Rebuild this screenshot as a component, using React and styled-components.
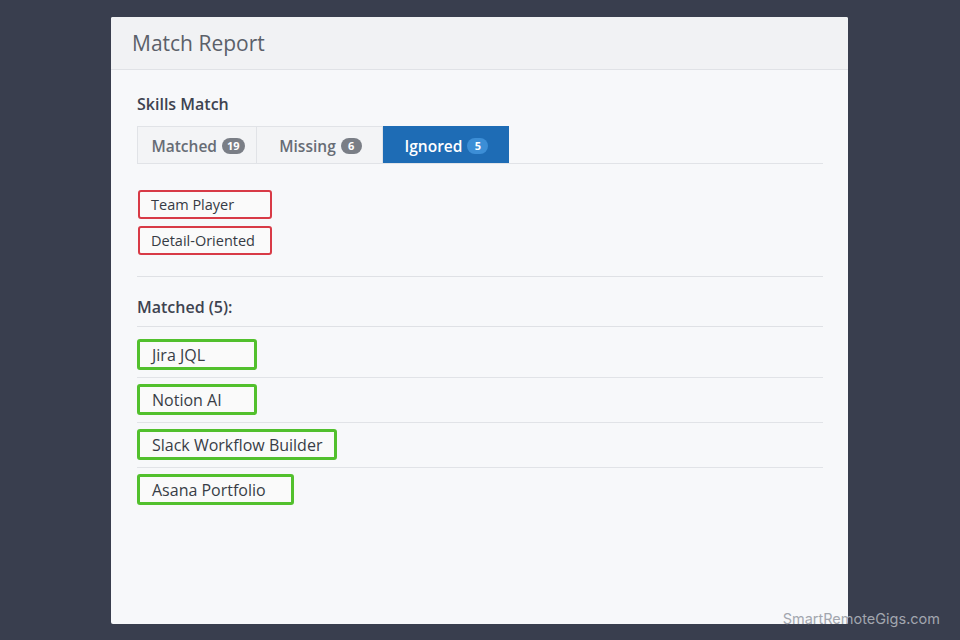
import React, { useState } from 'react';
import styled, { createGlobalStyle } from 'styled-components';

const GlobalStyle = createGlobalStyle`
  html, body {
    margin: 0;
    padding: 0;
    background: #393e4e;
    font-family: "Open Sans", "Noto Sans", sans-serif;
  }
  * { box-sizing: border-box; }
`;

const Page = styled.div`
  width: 960px;
  height: 640px;
  padding: 17px 0 0 111px;
  position: relative;
  overflow: hidden;
`;

const Card = styled.div`
  width: 737px;
  height: 607px;
  background: #f7f8fa;
  border-radius: 2px;
  display: flex;
  flex-direction: column;
`;

const CardHeader = styled.div`
  height: 53px;
  padding: 0 21px;
  display: flex;
  align-items: center;
  background: #f1f2f4;
  border-bottom: 1px solid #e0e2e6;
  border-radius: 2px 2px 0 0;
`;

const CardTitle = styled.h2`
  margin: 0;
  font-size: 21px;
  font-weight: 400;
  color: #5b6069;
`;

const CardBody = styled.div`
  padding: 23px 25px 0 26px;
`;

const SectionTitle = styled.h3`
  margin: 0 0 11px;
  font-size: 16px;
  line-height: 22px;
  font-weight: 600;
  color: #3e4350;
`;

const Tabs = styled.div`
  display: flex;
  border-bottom: 1px solid #e1e3e7;
`;

const Tab = styled.button`
  width: ${({ $w }) => $w}px;
  height: 37px;
  display: flex;
  align-items: center;
  justify-content: center;
  gap: 5px;
  padding: 1px 0 0 2px;
  font-family: inherit;
  font-size: 15.5px;
  font-weight: 600;
  color: ${({ $active }) => ($active ? '#ffffff' : '#676c75')};
  background: ${({ $active }) => ($active ? '#1e6cb5' : '#f3f4f6')};
  border: 1px solid ${({ $active }) => ($active ? '#1e6cb5' : '#e1e3e7')};
  border-left-width: ${({ $first }) => ($first ? '1px' : '0')};
  border-bottom: none;
  cursor: pointer;
`;

const Badge = styled.span`
  min-width: 21px;
  height: 16px;
  padding: 0 5px;
  border-radius: 8px;
  display: inline-flex;
  align-items: center;
  justify-content: center;
  font-size: 11px;
  font-weight: 700;
  color: #ffffff;
  background: ${({ $active }) => ($active ? '#3c8ed6' : '#7a7e86')};
`;

const IgnoredList = styled.div`
  display: flex;
  flex-direction: column;
  align-items: flex-start;
  gap: 7px;
  padding: 26px 0 21px 1px;
  border-bottom: 1px solid #dfe1e5;
`;

const IgnoredTag = styled.span`
  width: 134px;
  height: 29px;
  padding: 0 11px;
  display: flex;
  align-items: center;
  font-size: 14.5px;
  color: #363b44;
  background: #fafafa;
  border: 2px solid #d83a46;
  border-radius: 3px;
`;

const ListTitle = styled.h4`
  margin: 0;
  padding: 19px 0 8px;
  font-size: 16px;
  line-height: 22px;
  font-weight: 600;
  color: #3e4350;
  border-bottom: 1px solid #dfe1e5;
`;

const MatchRow = styled.div`
  padding: ${({ $first }) => ($first ? '12px' : '6px')} 0 7px;
  border-bottom: ${({ $last }) => ($last ? 'none' : '1px solid #e1e3e7')};
`;

const MatchTag = styled.span`
  min-width: ${({ $w }) => $w}px;
  height: 31px;
  padding: 0 12px;
  display: inline-flex;
  align-items: center;
  white-space: nowrap;
  font-size: 16px;
  color: #383d46;
  background: #fafafa;
  border: 3px solid #52c02d;
  border-radius: 3px;
`;

const Watermark = styled.div`
  position: absolute;
  right: 20px;
  bottom: 13px;
  font-family: Inter, "Noto Sans", sans-serif;
  font-size: 14.5px;
  color: #a2a6ae;
`;

const tabs = [
  { id: 'matched', label: 'Matched', count: 19, w: 120 },
  { id: 'missing', label: 'Missing', count: 6, w: 126 },
  { id: 'ignored', label: 'Ignored', count: 5, w: 126 },
];

const ignored = ['Team Player', 'Detail-Oriented'];
const matched = [
  { name: 'Jira JQL', w: 120 },
  { name: 'Notion AI', w: 120 },
  { name: 'Slack Workflow Builder', w: 199 },
  { name: 'Asana Portfolio', w: 157 },
];

export default function App() {
  const [active, setActive] = useState('ignored');

  return (
    <Page>
      <GlobalStyle />
      <Card>
        <CardHeader>
          <CardTitle>Match Report</CardTitle>
        </CardHeader>
        <CardBody>
          <SectionTitle>Skills Match</SectionTitle>
          <Tabs>
            {tabs.map((t, i) => (
              <Tab
                key={t.id}
                $w={t.w}
                $first={i === 0}
                $active={active === t.id}
                onClick={() => setActive(t.id)}
              >
                {t.label} <Badge $active={active === t.id}>{t.count}</Badge>
              </Tab>
            ))}
          </Tabs>
          <IgnoredList>
            {ignored.map((s) => (
              <IgnoredTag key={s}>{s}</IgnoredTag>
            ))}
          </IgnoredList>
          <ListTitle>Matched (5):</ListTitle>
          {matched.map((m, i) => (
            <MatchRow key={m.name} $first={i === 0} $last={i === matched.length - 1}>
              <MatchTag $w={m.w}>{m.name}</MatchTag>
            </MatchRow>
          ))}
        </CardBody>
      </Card>
      <Watermark>SmartRemoteGigs.com</Watermark>
    </Page>
  );
}
